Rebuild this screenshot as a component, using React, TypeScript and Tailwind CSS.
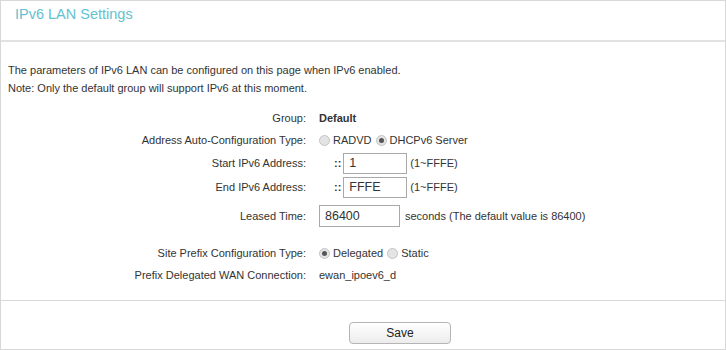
import React from 'react';

/** 라디오 버튼 (그림용) */
function Radio({ checked }: { checked?: boolean }) {
  return (
    <span className="inline-flex items-center justify-center w-[11px] h-[11px] rounded-full border border-[#c4c4c4] bg-[#e4e4e4] mr-[3px]">
      {checked && <span className="w-[5px] h-[5px] rounded-full bg-[#555]" />}
    </span>
  );
}

/** 라벨 + 값 한 줄 */
function Row({ label, h, className = '', children }: { label: string; h: string; className?: string; children: React.ReactNode }) {
  return (
    <div className={`flex items-center ${h} ${className}`}>
      <div className="w-[306px] text-right pr-[1px]">{label}</div>
      <div className="flex items-center pl-[12px]">{children}</div>
    </div>
  );
}

export default function App() {
  return (
    <div className="w-[726px] h-[350px] border border-[#d8d8d8] bg-white text-[11px] text-[#333] font-['Liberation_Sans',Arial,sans-serif] flex flex-col">
      {/* 제목 */}
      <div className="h-[41px] shrink-0 px-[14px] pt-[4px] text-[14.5px] leading-[18px] text-[#62c2d2] border-b-2 border-[#e2e2e2]">
        IPv6 LAN Settings
      </div>

      {/* 설명 */}
      <div className="px-[7px] pt-[19px] leading-[18px]">
        <p>The parameters of IPv6 LAN can be configured on this page when IPv6 enabled.</p>
        <p>Note: Only the default group will support IPv6 at this moment.</p>
      </div>

      {/* 설정 항목 */}
      <div className="mt-[10px] flex flex-col">
        <Row label="Group:" h="h-[22px]">
          <span className="font-bold">Default</span>
        </Row>
        <Row label="Address Auto-Configuration Type:" h="h-[22px]">
          <Radio />
          <span className="mr-[4px]">RADVD</span>
          <Radio checked />
          <span>DHCPv6 Server</span>
        </Row>
        <Row label="Start IPv6 Address:" h="h-[24px]">
          <span className="ml-[15px] mr-[2px] font-bold">::</span>
          <span className="w-[64px] h-[21px] border border-[#a9a9a9] px-[5px] flex items-center text-[12.5px]">1</span>
          <span className="ml-[3px]">(1~FFFE)</span>
        </Row>
        <Row label="End IPv6 Address:" h="h-[24px]">
          <span className="ml-[15px] mr-[2px] font-bold">::</span>
          <span className="w-[64px] h-[21px] border border-[#a9a9a9] px-[5px] flex items-center text-[12.5px]">FFFE</span>
          <span className="ml-[3px]">(1~FFFE)</span>
        </Row>
        <Row label="Leased Time:" h="h-[26px]" className="mt-[4px]">
          <span className="w-[81px] h-[22px] border border-[#a9a9a9] px-[5px] flex items-center text-[12.5px]">86400</span>
          <span className="ml-[5px]">seconds (The default value is 86400)</span>
        </Row>
        <Row label="Site Prefix Configuration Type:" h="h-[22px]" className="mt-[13px]">
          <Radio checked />
          <span className="mr-[4px]">Delegated</span>
          <Radio />
          <span>Static</span>
        </Row>
        <Row label="Prefix Delegated WAN Connection:" h="h-[22px]">
          <span>ewan_ipoev6_d</span>
        </Row>
      </div>

      {/* 저장 */}
      <div className="mt-[14px] border-t border-[#d8d8d8] flex justify-center pt-[21px]">
        <button className="ml-[74px] w-[102px] h-[22px] rounded-[4px] border border-[#b5b5b5] bg-gradient-to-b from-white to-[#ececec] text-[12px] text-[#222]">
          Save
        </button>
      </div>
    </div>
  );
}
